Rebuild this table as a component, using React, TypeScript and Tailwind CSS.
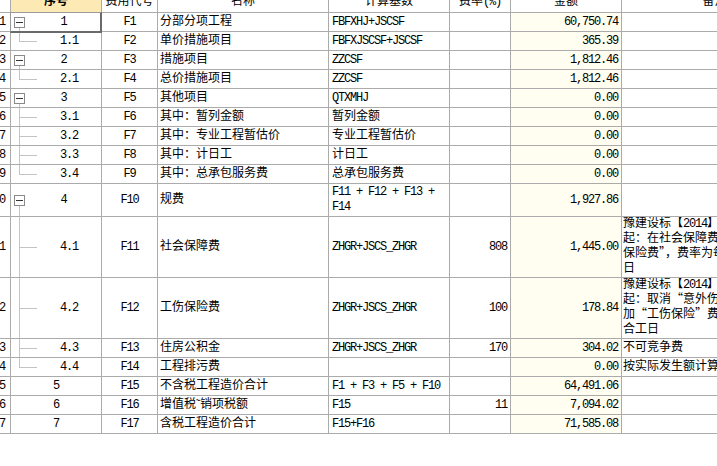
import React from 'react';

type Tree = 'parent' | 'child' | 'last' | 'none';

interface Row {
  n: number;
  seq: string;
  tree: Tree;
  code: string;
  name: string;
  base: string[];
  rate: string;
  amount: string;
  note: string[];
  h: number;
}

const rows: Row[] = [
  { n: 1, seq: '1', tree: 'parent', code: 'F1', name: '分部分项工程', base: ['FBFXHJ+JSCSF'], rate: '', amount: '60,750.74', note: [], h: 19 },
  { n: 2, seq: '1.1', tree: 'last', code: 'F2', name: '单价措施项目', base: ['FBFXJSCSF+JSCSF'], rate: '', amount: '365.39', note: [], h: 19 },
  { n: 3, seq: '2', tree: 'parent', code: 'F3', name: '措施项目', base: ['ZZCSF'], rate: '', amount: '1,812.46', note: [], h: 19 },
  { n: 4, seq: '2.1', tree: 'last', code: 'F4', name: '总价措施项目', base: ['ZZCSF'], rate: '', amount: '1,812.46', note: [], h: 19 },
  { n: 5, seq: '3', tree: 'parent', code: 'F5', name: '其他项目', base: ['QTXMHJ'], rate: '', amount: '0.00', note: [], h: 19 },
  { n: 6, seq: '3.1', tree: 'child', code: 'F6', name: '其中：暂列金额', base: ['暂列金额'], rate: '', amount: '0.00', note: [], h: 19 },
  { n: 7, seq: '3.2', tree: 'child', code: 'F7', name: '其中：专业工程暂估价', base: ['专业工程暂估价'], rate: '', amount: '0.00', note: [], h: 19 },
  { n: 8, seq: '3.3', tree: 'child', code: 'F8', name: '其中：计日工', base: ['计日工'], rate: '', amount: '0.00', note: [], h: 19 },
  { n: 9, seq: '3.4', tree: 'last', code: 'F9', name: '其中：总承包服务费', base: ['总承包服务费'], rate: '', amount: '0.00', note: [], h: 19 },
  { n: 10, seq: '4', tree: 'parent', code: 'F10', name: '规费', base: ['F11 + F12 + F13 +', 'F14'], rate: '', amount: '1,927.86', note: [], h: 33 },
  {
    n: 11, seq: '4.1', tree: 'child', code: 'F11', name: '社会保障费', base: ['ZHGR+JSCS_ZHGR'], rate: '808', amount: '1,445.00',
    note: ['豫建设标【2014】29号文规定，自', '起：在社会保障费中增加“工伤', '保险费”，费率为每综合', '日'], h: 61,
  },
  {
    n: 12, seq: '4.2', tree: 'child', code: 'F12', name: '工伤保险费', base: ['ZHGR+JSCS_ZHGR'], rate: '100', amount: '178.84',
    note: ['豫建设标【2014】29号文规定，自', '起：取消“意外伤害保险费”，增', '加“工伤保险”费，费率为每综', '合工日'], h: 61,
  },
  { n: 13, seq: '4.3', tree: 'child', code: 'F13', name: '住房公积金', base: ['ZHGR+JSCS_ZHGR'], rate: '170', amount: '304.02', note: ['不可竞争费'], h: 19 },
  { n: 14, seq: '4.4', tree: 'last', code: 'F14', name: '工程排污费', base: [], rate: '', amount: '0.00', note: ['按实际发生额计算'], h: 19 },
  { n: 15, seq: '5', tree: 'none', code: 'F15', name: '不含税工程造价合计', base: ['F1 + F3 + F5 + F10'], rate: '', amount: '64,491.06', note: [], h: 19 },
  { n: 16, seq: '6', tree: 'none', code: 'F16', name: '增值税˜销项税额', base: ['F15'], rate: '11', amount: '7,094.02', note: [], h: 19 },
  { n: 17, seq: '7', tree: 'none', code: 'F17', name: '含税工程造价合计', base: ['F15+F16'], rate: '', amount: '71,585.08', note: [], h: 19 },
];

const heightClass: Record<number, string> = {
  19: 'h-[19px]',
  33: 'h-[33px]',
  61: 'h-[61px]',
};

// ascii runs get squeezed to half-width like the old song-ti bitmap font,
// cjk runs keep full-width punctuation (quotes) and don't grow the line box
function Txt({ text }: { text: string }) {
  const parts = text.split(/([\x20-\x7e]+)/);
  return (
    <>
      {parts.map((p, i) =>
        /^[\x20-\x7e]+$/.test(p) ? (
          <span key={i} className="font-['Liberation_Mono'] tracking-[-1.2px] whitespace-pre">
            {p}
          </span>
        ) : (
          <span key={i} className="font-['Noto_Sans_CJK_SC'] leading-[10px] [font-feature-settings:'fwid']">
            {p}
          </span>
        )
      )}
    </>
  );
}

function TreeMark({ tree, h }: { tree: Tree; h: number }) {
  const ch = h - 1;
  const mid = Math.floor(ch / 2);
  if (tree === 'parent') {
    return (
      <svg width={15} height={ch} className="shrink-0">
        <line x1={8.5} y1={mid + 6} x2={8.5} y2={ch} stroke="#c4c4c4" />
        <rect x={3.5} y={mid - 4.5} width={10} height={10} fill="#fff" stroke="#8a8a8a" />
        <line x1={5} y1={mid + 0.5} x2={12} y2={mid + 0.5} stroke="#333" />
      </svg>
    );
  }
  if (tree === 'child' || tree === 'last') {
    return (
      <svg width={26} height={ch} className="shrink-0">
        <line x1={8.5} y1={0} x2={8.5} y2={tree === 'last' ? mid + 1 : ch} stroke="#c4c4c4" />
        <line x1={8.5} y1={mid + 0.5} x2={26} y2={mid + 0.5} stroke="#c4c4c4" />
      </svg>
    );
  }
  return null;
}

const cell = 'border-r border-b border-[#ababab] flex items-center shrink-0 overflow-hidden';

export default function App() {
  return (
    <div className="w-[717px] h-[466px] overflow-hidden bg-white text-black text-[12px] leading-[15px] font-['Liberation_Mono','Noto_Sans_CJK_SC',monospace]">
      <div className="w-[808px]">
        {/* header, scrolled so its top is cut off */}
        <div className="flex h-[13px]">
          <div className={`${cell} w-[11px] bg-white`} />
          <div className={`${cell} w-[91px] bg-[#fde9b3] justify-center items-start`}>
            <span className="-mt-[5px] font-bold">序号</span>
          </div>
          <div className={`${cell} w-[56px] justify-center items-start`}>
            <span className="-mt-[5px]">费用代号</span>
          </div>
          <div className={`${cell} w-[171px] justify-center items-start`}>
            <span className="-mt-[5px]">名称</span>
          </div>
          <div className={`${cell} w-[121px] justify-center items-start`}>
            <span className="-mt-[5px]">计算基数</span>
          </div>
          <div className={`${cell} w-[61px] justify-center items-start`}>
            <span className="-mt-[5px]">
              <Txt text="费率(%)" />
            </span>
          </div>
          <div className={`${cell} w-[111px] justify-center items-start`}>
            <span className="-mt-[5px]">金额</span>
          </div>
          <div className={`${cell} w-[186px] justify-center items-start`}>
            <span className="-mt-[5px]">备注</span>
          </div>
        </div>

        {rows.map((r) => (
          <div key={r.n} className={`flex ${heightClass[r.h]}`}>
            <div className={`${cell} w-[11px] justify-end pr-[5px]`}>
              <span className="font-['Liberation_Mono'] tracking-[-1.2px] whitespace-nowrap">{r.n}</span>
            </div>

            <div className={`${cell} w-[91px] relative overflow-visible`}>
              <TreeMark tree={r.tree} h={r.h} />
              <span className="flex-1 text-center font-['Liberation_Mono'] tracking-[-1.2px]">{r.seq}</span>
              {r.n === 1 && (
                <div className="absolute -left-px -top-px -right-px -bottom-[2px] z-10 border border-[#9a9a9a] border-r-2 border-b-2 border-r-[#6a6a6a] border-b-[#6a6a6a] pointer-events-none" />
              )}
            </div>

            <div className={`${cell} w-[56px] justify-center`}>
              <span className="font-['Liberation_Mono'] tracking-[-1.2px]">{r.code}</span>
            </div>

            <div className={`${cell} w-[171px] pl-[2px] whitespace-nowrap`}>
              <div>
                <Txt text={r.name} />
              </div>
            </div>

            <div className={`${cell} w-[121px] pl-[3px]`}>
              <div className="flex flex-col whitespace-nowrap">
                {r.base.map((b, i) => (
                  <div key={i}>
                    <Txt text={b} />
                  </div>
                ))}
              </div>
            </div>

            <div className={`${cell} w-[61px] justify-end pr-[3px]`}>
              <span className="font-['Liberation_Mono'] tracking-[-1.2px]">{r.rate}</span>
            </div>

            <div className={`${cell} w-[111px] justify-end pr-[3px] bg-[#fffef0]`}>
              <span className="font-['Liberation_Mono'] tracking-[-1.2px]">{r.amount}</span>
            </div>

            <div className={`${cell} w-[186px] pl-[1px]`}>
              <div className="flex flex-col whitespace-nowrap">
                {r.note.map((t, i) => (
                  <div key={i}>
                    <Txt text={t} />
                  </div>
                ))}
              </div>
            </div>
          </div>
        ))}
      </div>
    </div>
  );
}
